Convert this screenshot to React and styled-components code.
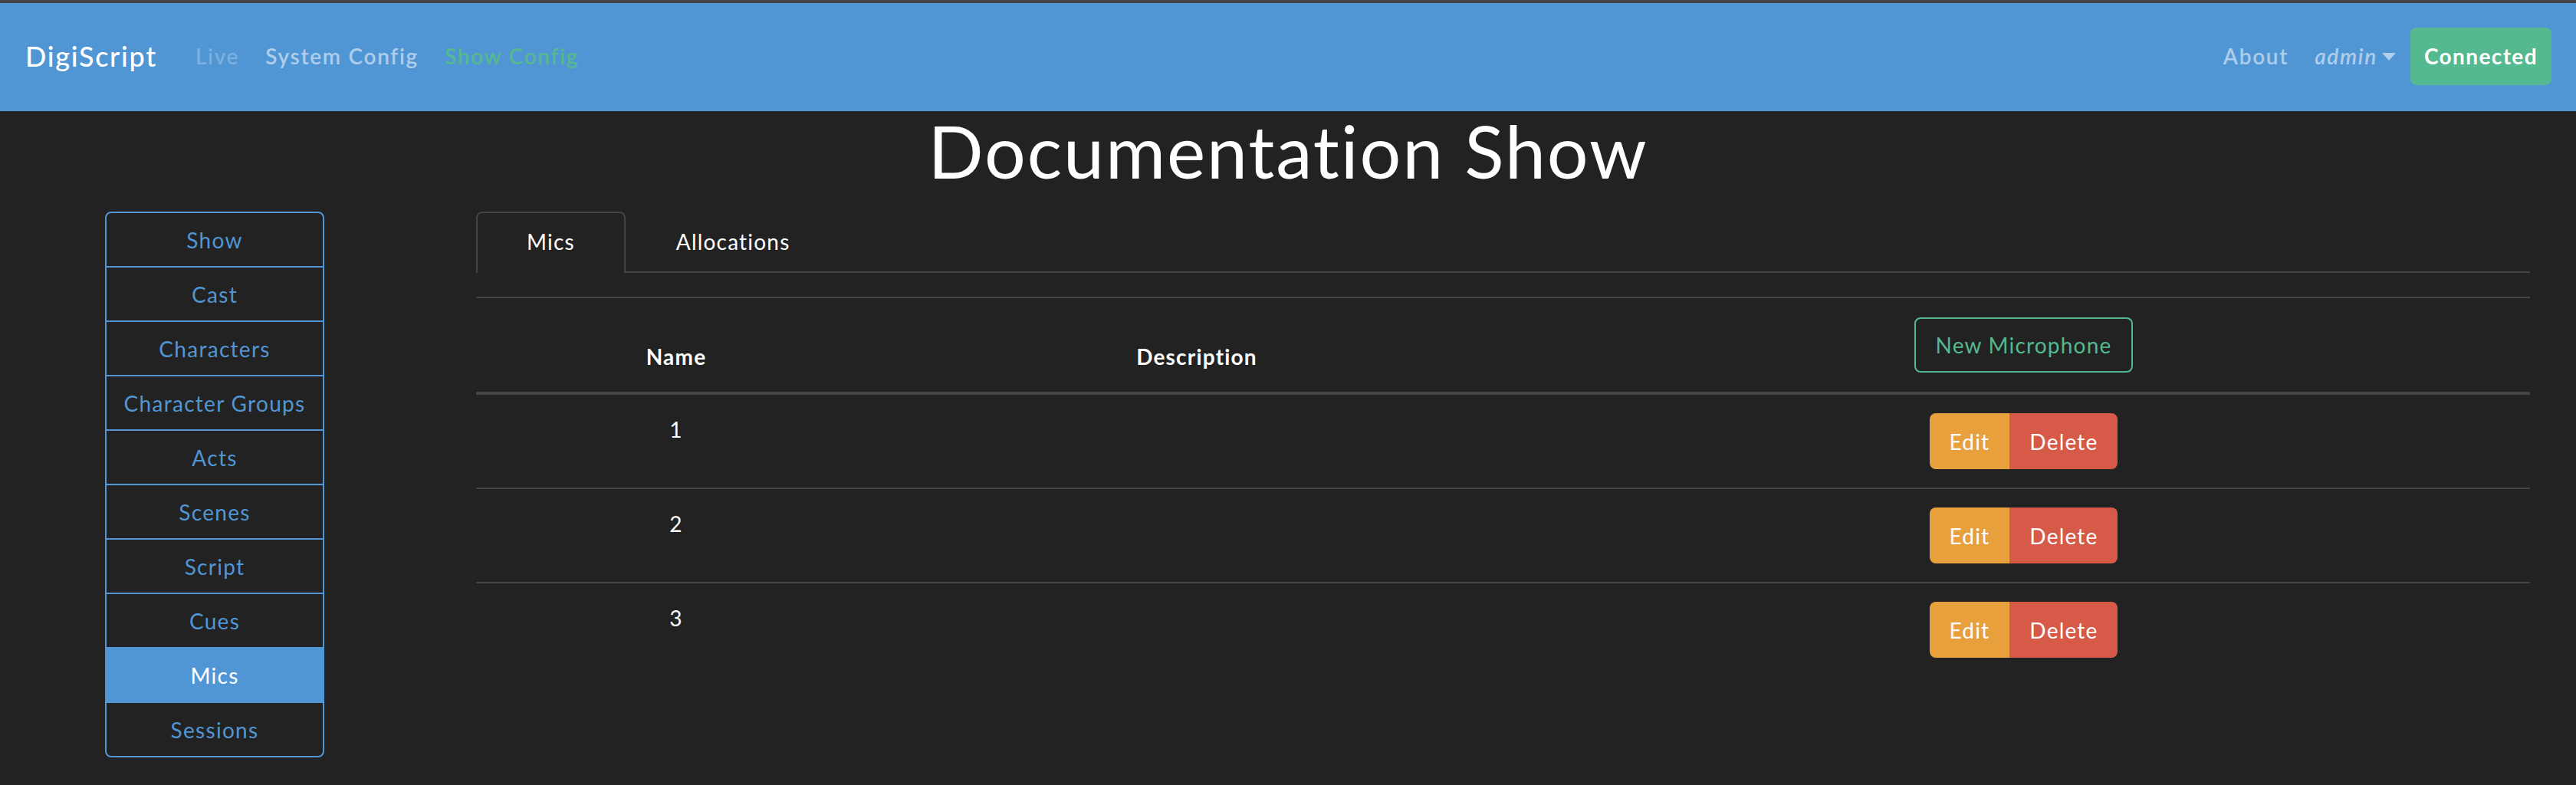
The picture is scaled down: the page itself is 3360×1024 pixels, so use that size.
import React from "react";
import styled, { createGlobalStyle } from "styled-components";

const GlobalStyle = createGlobalStyle`
  html, body {
    margin: 0;
    padding: 0;
    background: #222222;
  }
  body {
    font-family: "Lato", "Liberation Sans", sans-serif;
    color: #ffffff;
    font-size: 28px;
    line-height: 1.5;
    letter-spacing: 1.2px;
    border-top: 4px solid #444444;
  }
  * {
    box-sizing: border-box;
  }
`;

const BLUE = "#5196d4";
const GREEN = "#55b98f";

const Navbar = styled.nav`
  height: 141px;
  background: ${BLUE};
  display: flex;
  align-items: center;
  padding: 0 32px 3px 33px;
`;

const Brand = styled.a`
  font-size: 36px;
  font-weight: 500;
  letter-spacing: 1.7px;
  color: #ffffff;
  margin-right: 33px;
  line-height: 1;
`;

const NavLink = styled.a`
  font-size: 28px;
  font-weight: 600;
  letter-spacing: 1.7px;
  padding: 0 17px;
  line-height: 42px;
  font-style: ${({ $italic }) => ($italic ? "italic" : "normal")};
  color: ${({ $state }) =>
    $state === "disabled"
      ? "rgba(255, 255, 255, 0.25)"
      : $state === "active"
      ? GREEN
      : "rgba(255, 255, 255, 0.55)"};
  display: inline-flex;
  align-items: center;
  gap: 6px;
`;

const Caret = styled.span`
  width: 0;
  height: 0;
  border-left: 9px solid transparent;
  border-right: 9px solid transparent;
  border-top: 10px solid rgba(255, 255, 255, 0.55);
  margin-top: 2px;
`;

const Spacer = styled.div`
  flex: 1;
`;

const ConnectedBtn = styled.button`
  height: 75px;
  padding: 0 18px;
  margin-left: 2px;
  border: none;
  border-radius: 8px;
  background: ${GREEN};
  color: #ffffff;
  font-family: inherit;
  font-size: 28px;
  font-weight: 700;
  letter-spacing: 1.4px;
`;

const Title = styled.h1`
  margin: 4px 0 0;
  font-size: 95px;
  font-weight: 400;
  line-height: 95px;
  text-align: center;
  letter-spacing: 1.9px;
`;

const Row = styled.div`
  display: grid;
  grid-template-columns: 560px 1fr;
  margin-top: 32px;
`;

const SideCol = styled.div`
  display: flex;
  justify-content: center;
  align-items: flex-start;
`;

const ListGroup = styled.div`
  width: 286px;
  border: 2px solid ${BLUE};
  border-radius: 8px;
  overflow: hidden;
  display: flex;
  flex-direction: column;
`;

const ListItem = styled.a`
  height: 71px;
  display: flex;
  align-items: center;
  justify-content: center;
  font-size: 28px;
  letter-spacing: 1.3px;
  color: ${({ $active }) => ($active ? "#ffffff" : BLUE)};
  background: ${({ $active }) => ($active ? BLUE : "transparent")};
  border-top: 2px solid ${BLUE};
  &:first-child {
    border-top: none;
    height: 69px;
  }
`;

const MainCol = styled.div`
  padding: 0 60px 0 61px;
`;

const Tabs = styled.div`
  display: flex;
  border-bottom: 2px solid #444444;
`;

const Tab = styled.a`
  height: 80px;
  margin-bottom: -2px;
  padding: 16px 64px 0;
  font-size: 28px;
  line-height: 42px;
  color: #ffffff;
  border: 2px solid ${({ $active }) => ($active ? "#444444" : "transparent")};
  border-bottom: none;
  border-radius: 8px 8px 0 0;
  background: ${({ $active }) => ($active ? "#222222" : "transparent")};
`;

const Table = styled.table`
  width: 100%;
  margin-top: 31px;
  border-collapse: collapse;
  table-layout: fixed;
`;

const Th = styled.th`
  width: ${({ $w }) => $w || "auto"};
  padding: 25px 21px;
  border-top: 2px solid #444444;
  border-bottom: 4px solid #444444;
  vertical-align: bottom;
  text-align: center;
  font-weight: 700;
  font-size: 28px;
  line-height: 42px;
`;

const Td = styled.td`
  padding: 24px 21px;
  border-top: 2px solid #444444;
  vertical-align: top;
  text-align: center;
  font-size: 28px;
  line-height: 42px;
`;

const OutlineBtn = styled.button`
  height: 72px;
  padding: 0 26px;
  border: 2px solid ${GREEN};
  border-radius: 8px;
  background: transparent;
  color: ${GREEN};
  font-family: inherit;
  font-size: 28px;
  letter-spacing: 1.2px;
  vertical-align: bottom;
`;

const BtnGroup = styled.div`
  display: inline-flex;
`;

const GroupBtn = styled.button`
  height: 73px;
  padding: 0 26px;
  border: none;
  color: #ffffff;
  font-family: inherit;
  font-size: 28px;
  letter-spacing: 1.2px;
  background: ${({ $kind }) => ($kind === "warning" ? "#e8a03c" : "#d75a49")};
  border-radius: ${({ $kind }) => ($kind === "warning" ? "8px 0 0 8px" : "0 8px 8px 0")};
`;

const sections = [
  "Show",
  "Cast",
  "Characters",
  "Character Groups",
  "Acts",
  "Scenes",
  "Script",
  "Cues",
  "Mics",
  "Sessions",
];

const mics = [{ id: 1, name: "1" }, { id: 2, name: "2" }, { id: 3, name: "3" }];

export default function App() {
  return (
    <>
      <GlobalStyle />
      <Navbar>
        <Brand>DigiScript</Brand>
        <NavLink $state="disabled">Live</NavLink>
        <NavLink>System Config</NavLink>
        <NavLink $state="active">Show Config</NavLink>
        <Spacer />
        <NavLink>About</NavLink>
        <NavLink $italic>
          admin
          <Caret />
        </NavLink>
        <ConnectedBtn>Connected</ConnectedBtn>
      </Navbar>
      <Title>Documentation Show</Title>
      <Row>
        <SideCol>
          <ListGroup>
            {sections.map((s) => (
              <ListItem key={s} $active={s === "Mics"}>
                {s}
              </ListItem>
            ))}
          </ListGroup>
        </SideCol>
        <MainCol>
          <Tabs>
            <Tab $active>Mics</Tab>
            <Tab>Allocations</Tab>
          </Tabs>
          <Table>
            <thead>
              <tr>
                <Th $w="522px">Name</Th>
                <Th $w="836px">Description</Th>
                <Th>
                  <OutlineBtn>New Microphone</OutlineBtn>
                </Th>
              </tr>
            </thead>
            <tbody>
              {mics.map((mic) => (
                <tr key={mic.id}>
                  <Td>{mic.name}</Td>
                  <Td></Td>
                  <Td>
                    <BtnGroup>
                      <GroupBtn $kind="warning">Edit</GroupBtn>
                      <GroupBtn $kind="danger">Delete</GroupBtn>
                    </BtnGroup>
                  </Td>
                </tr>
              ))}
            </tbody>
          </Table>
        </MainCol>
      </Row>
    </>
  );
}
